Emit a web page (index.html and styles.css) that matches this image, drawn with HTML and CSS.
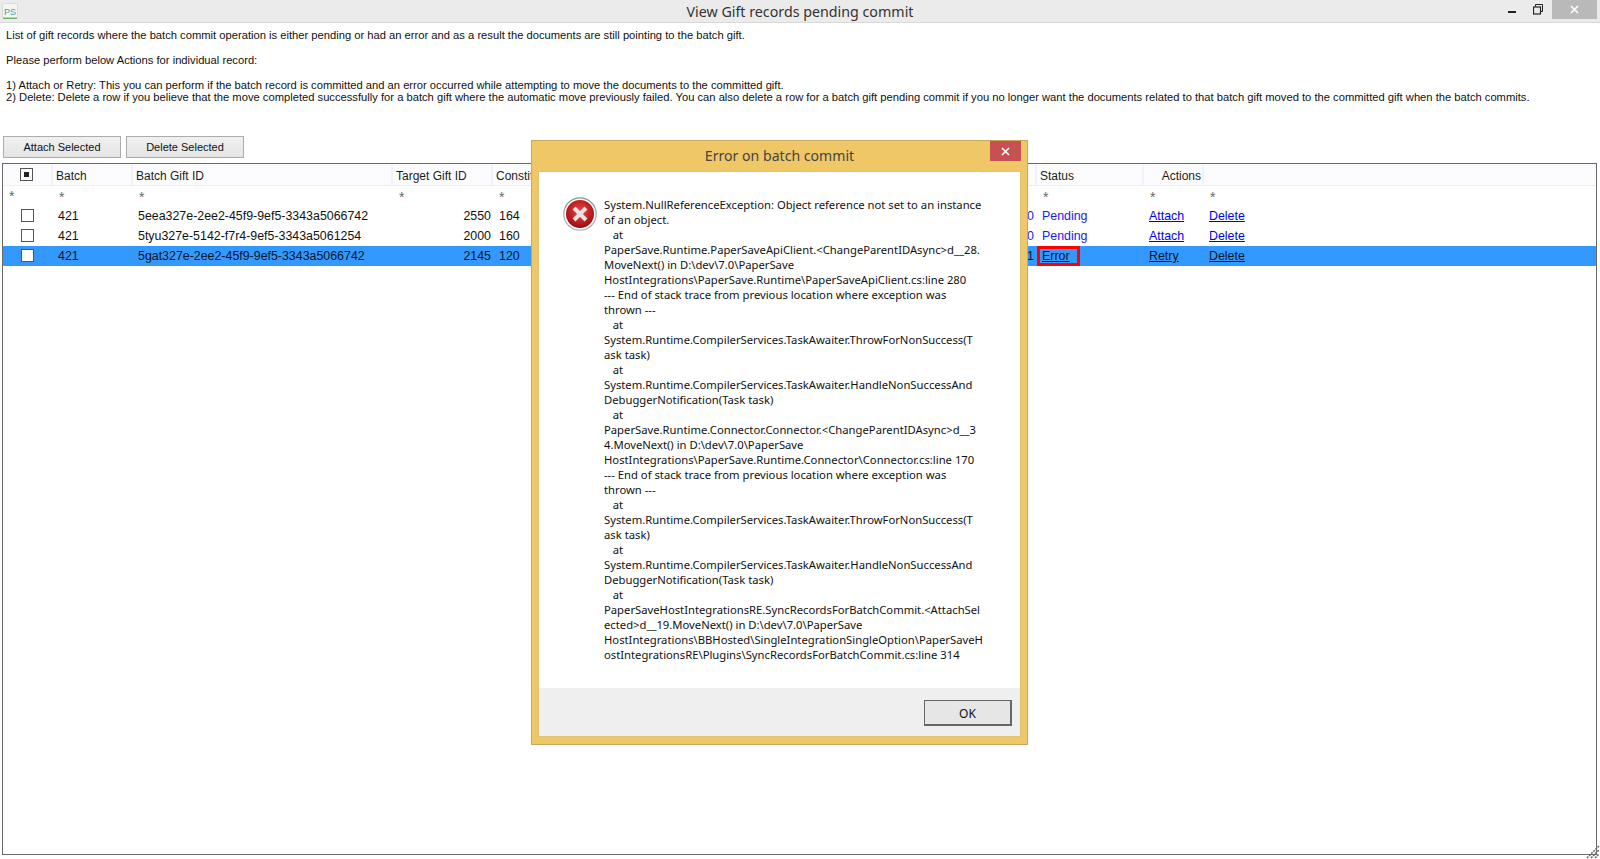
FILE: index.html
```html
<!DOCTYPE html>
<html lang="en">
<head>
<meta charset="utf-8">
<title>View Gift records pending commit</title>
<link rel="stylesheet" href="styles.css">
</head>
<body>
<div class="window">
  <header class="titlebar">
    <svg class="app-icon" width="16" height="16" viewBox="0 0 16 16"><rect x="0.5" y="0.5" width="15" height="15" rx="2" fill="#f4f6f4" stroke="#d5ddd5"/><path d="M1 15.2h14" stroke="#58a84a" stroke-width="1.2"/><text x="2" y="12" class="app-icon-text">PS</text></svg>
    <div class="title">View Gift records pending commit</div>
    <div class="controls">
      <svg class="ctl-min" width="8" height="2" viewBox="0 0 8 2"><rect width="8" height="2" fill="#222"/></svg>
      <svg class="ctl-max" width="10" height="11" viewBox="0 0 10 11"><path d="M2.5 2.5V.5h7v7H7.5" fill="none" stroke="#222"/><rect x=".5" y="3" width="7" height="7" fill="none" stroke="#222" stroke-width="1.2"/></svg>
      <div class="ctl-close"><svg width="9" height="9" viewBox="0 0 9 9"><path d="M1 1l7 7M8 1L1 8" stroke="#fff" stroke-width="1.6"/></svg></div>
    </div>
  </header>

  <section class="notes">
    <p class="gap">List of gift records where the batch commit operation is either pending or had an error and as a result the documents are still pointing to the batch gift.</p>
    <p class="gap">Please perform below Actions for individual record:</p>
    <p>1) Attach or Retry: This you can perform if the batch record is committed and an error occurred while attempting to move the documents to the committed gift.</p>
    <p>2) Delete: Delete a row if you believe that the move completed successfully for a batch gift where the automatic move previously failed. You can also delete a row for a batch gift pending commit if you no longer want the documents related to that batch gift moved to the committed gift when the batch commits.</p>
  </section>

  <div class="toolbar">
    <button class="btn">Attach Selected</button>
    <button class="btn">Delete Selected</button>
  </div>

  <main class="grid">
    <div class="row head">
      <div class="c c-check"><span class="check mixed"></span></div>
      <div class="c c-batch">Batch</div>
      <div class="c c-gift">Batch Gift ID</div>
      <div class="c c-target">Target Gift ID</div>
      <div class="c c-cons">Constituent ID</div>
      <div class="c c-hidden"></div>
      <div class="c c-status">Status</div>
      <div class="c c-act actions-h">Actions</div>
      <div class="c c-del"></div>
    </div>
    <div class="row filter">
      <div class="c c-check star-first">*</div>
      <div class="c c-batch">*</div>
      <div class="c c-gift">*</div>
      <div class="c c-target">*</div>
      <div class="c c-cons">*</div>
      <div class="c c-hidden"></div>
      <div class="c c-status">*</div>
      <div class="c c-act">*</div>
      <div class="c c-del">*</div>
    </div>
    <div class="row">
      <div class="c c-check"><span class="check"></span></div>
      <div class="c c-batch">421</div>
      <div class="c c-gift">5eea327e-2ee2-45f9-9ef5-3343a5066742</div>
      <div class="c c-target num">2550</div>
      <div class="c c-cons">164</div>
      <div class="c c-hidden num link-plain">0</div>
      <div class="c c-status link-plain">Pending</div>
      <div class="c c-act"><a href="#">Attach</a></div>
      <div class="c c-del"><a href="#">Delete</a></div>
    </div>
    <div class="row">
      <div class="c c-check"><span class="check"></span></div>
      <div class="c c-batch">421</div>
      <div class="c c-gift">5tyu327e-5142-f7r4-9ef5-3343a5061254</div>
      <div class="c c-target num">2000</div>
      <div class="c c-cons">160</div>
      <div class="c c-hidden num link-plain">0</div>
      <div class="c c-status link-plain">Pending</div>
      <div class="c c-act"><a href="#">Attach</a></div>
      <div class="c c-del"><a href="#">Delete</a></div>
    </div>
    <div class="row selected">
      <div class="c c-check"><span class="check"></span></div>
      <div class="c c-batch">421</div>
      <div class="c c-gift">5gat327e-2ee2-45f9-9ef5-3343a5066742</div>
      <div class="c c-target num">2145</div>
      <div class="c c-cons">120</div>
      <div class="c c-hidden num">1</div>
      <div class="c c-status"><a class="error-box" href="#">Error</a></div>
      <div class="c c-act"><a href="#">Retry</a></div>
      <div class="c c-del"><a href="#">Delete</a></div>
    </div>
  </main>
  <svg class="grip" width="14" height="14" viewBox="0 0 14 14"><path d="M1 13L13 1M5 13L13 5M9 13l4-4" stroke="#666" stroke-width="1.5" stroke-dasharray="2 1"/></svg>
</div>

<div class="dialog" role="dialog">
  <div class="dialog-title">
    <span>Error on batch commit</span>
    <div class="dialog-close"><svg width="9" height="9" viewBox="0 0 9 9"><path d="M1 1l7 7M8 1L1 8" stroke="#fff" stroke-width="1.6"/></svg></div>
  </div>
  <div class="dialog-inner">
    <div class="dialog-body">
      <svg class="err-icon" width="34" height="34" viewBox="0 0 34 34">
        <defs>
          <radialGradient id="red" cx="50%" cy="40%" r="60%"><stop offset="0" stop-color="#e4474a"/><stop offset="0.7" stop-color="#bb1c20"/><stop offset="1" stop-color="#8e0f12"/></radialGradient>
          <linearGradient id="ring" x1="0" y1="0" x2="0" y2="1"><stop offset="0" stop-color="#8f8f8f"/><stop offset="1" stop-color="#b8b8b8"/></linearGradient>
        </defs>
        <circle cx="17" cy="17" r="16.2" fill="#fff" stroke="url(#ring)" stroke-width="1.2"/>
        <circle cx="17" cy="17" r="14" fill="url(#red)"/>
        <path d="M11 11l12 12M23 11L11 23" stroke="#e8e4e4" stroke-width="4"/>
      </svg>
      <div class="message">System.NullReferenceException: Object reference not set to an instance
of an object.
   at
PaperSave.Runtime.PaperSaveApiClient.&lt;ChangeParentIDAsync&gt;d__28.
MoveNext() in D:\dev\7.0\PaperSave
HostIntegrations\PaperSave.Runtime\PaperSaveApiClient.cs:line 280
--- End of stack trace from previous location where exception was
thrown ---
   at
System.Runtime.CompilerServices.TaskAwaiter.ThrowForNonSuccess(T
ask task)
   at
System.Runtime.CompilerServices.TaskAwaiter.HandleNonSuccessAnd
DebuggerNotification(Task task)
   at
PaperSave.Runtime.Connector.Connector.&lt;ChangeParentIDAsync&gt;d__3
4.MoveNext() in D:\dev\7.0\PaperSave
HostIntegrations\PaperSave.Runtime.Connector\Connector.cs:line 170
--- End of stack trace from previous location where exception was
thrown ---
   at
System.Runtime.CompilerServices.TaskAwaiter.ThrowForNonSuccess(T
ask task)
   at
System.Runtime.CompilerServices.TaskAwaiter.HandleNonSuccessAnd
DebuggerNotification(Task task)
   at
PaperSaveHostIntegrationsRE.SyncRecordsForBatchCommit.&lt;AttachSel
ected&gt;d__19.MoveNext() in D:\dev\7.0\PaperSave
HostIntegrations\BBHosted\SingleIntegrationSingleOption\PaperSaveH
ostIntegrationsRE\Plugins\SyncRecordsForBatchCommit.cs:line 314</div>
    </div>
    <div class="dialog-foot"><button class="ok">OK</button></div>
  </div>
</div>
</body>
</html>
```
FILE: styles.css
```css
* { box-sizing: border-box; }
html, body { margin: 0; height: 859px; overflow: hidden; background: #fff; }
body { font-family: "Liberation Sans", Arial, sans-serif; font-size: 12.4px; color: #111; position: relative; }
.window { height: 859px; display: flex; flex-direction: column; }

.titlebar { height: 23px; flex: none; background: #ebebeb; border-bottom: 1px solid #d8d8d8; display: flex; align-items: flex-start; position: relative; }
.app-icon { margin: 3px 0 0 2px; }
.app-icon-text { font: 9px "Liberation Sans", sans-serif; fill: #3aa0a8; }
.title { position: absolute; left: 0; right: 0; top: 3px; text-align: center; font: 14.25px/17px "Noto Sans", sans-serif; color: #333; }
.controls { margin-left: auto; display: flex; align-items: flex-start; position: relative; }
.ctl-min { margin: 11px 17px 0 0; }
.ctl-max { margin: 4px 9px 0 0; }
.ctl-close { width: 45px; height: 19px; margin-right: 3px; background: #b9b9b9; display: flex; align-items: center; justify-content: center; }

.notes { padding: 6px 0 0 6px; height: 113px; flex: none; font-size: 11.2px; line-height: 12px; color: #111; }
.notes p { margin: 0; white-space: nowrap; }
.notes .gap { margin-bottom: 13px; }

.toolbar { display: flex; gap: 5px; padding-left: 3px; height: 27px; flex: none; }
.btn { width: 118px; height: 22px; padding: 0; font: 11px "Liberation Sans", sans-serif; color: #111; border: 1px solid #acacac; background: linear-gradient(#f0f0f0, #e5e5e5); }

.grid { flex: none; height: 692px; margin: 0 3px 0 2px; border: 1px solid #696969; background: #fff; overflow: hidden; }
.row { display: flex; height: 20px; align-items: center; }
.row.head { height: 22px; border-bottom: 1px solid #e8f0f8; background: #fcfcfe; font-size: 12px; color: #1c1c1c; }
.row.filter { color: #666; height: 20px; }
.c { flex: none; white-space: nowrap; overflow: hidden; padding-left: 5px; height: 100%; line-height: 20px; }
.head .c { border-right: 2px solid #f0f4fa; padding-left: 3px; line-height: 24px; }
.head .c-del { border-right: 0; }
.c-check { width: 50px; padding: 0 1px 0 0; display: flex; justify-content: center; align-items: center; }
.c-check .check { margin-top: -1px; }
.head .c-check .check { margin-top: 0; }
.c-batch { width: 80px; padding-left: 5px; }
.c-gift { width: 260px; }
.c-target { width: 100px; }
.c-cons { width: 400px; }
.c-hidden { width: 144px; }
.c-status { width: 107px; }
.c-act { width: 60px; }
.c-del { width: 100px; }
.head .c-check { padding-left: 0; }
.filter .c { padding-left: 6px; font-size: 14px; line-height: 22px; }
.filter .c.star-first { justify-content: flex-start; padding-left: 6px; }
.num { text-align: right; padding-right: 2px; }
.c-hidden.num { padding-right: 3px; }
.c-cons { padding-left: 6px; }
.head .actions-h { text-align: right; padding-right: 1px; }
.check { display: block; width: 13px; height: 13px; border: 1px solid #555; background: #fff; position: relative; }
.check.mixed::after { content: ""; position: absolute; left: 3px; top: 3px; width: 5px; height: 5px; background: #222; }
.link-plain { color: #1a1aee; }
a { color: #0000ee; }
.selected { background: #3399ff; }
.selected a, .selected .c { color: #061428; }
.error-box { display: block; width: 43px; height: 20px; margin-left: -5px; padding-left: 2px; line-height: 14px; border: 3px solid #f00; }

.grip { position: absolute; right: 0; bottom: 0; }

.dialog { position: absolute; left: 531px; top: 140px; width: 497px; height: 605px; border: 1px solid #c9a85a; background: #f0c766; padding: 0 6px 7px 6px; display: flex; flex-direction: column; }
.dialog-title { height: 30px; flex: none; position: relative; text-align: center; font: 14.1px/29px "Noto Sans", sans-serif; color: #444; }
.dialog-close { position: absolute; right: 0; top: 0; width: 31px; height: 20px; background: #c75050; display: flex; align-items: center; justify-content: center; }
.dialog-inner { flex: 1; background: #fff; display: flex; flex-direction: column; border: 1px solid #dfc27a; }
.dialog-body { flex: 1; display: flex; padding: 25px 0 0 24px; }
.err-icon { flex: none; margin-right: 7px; margin-top: 0; }
.message { white-space: pre; font: 11.25px/15px "Noto Sans", sans-serif; color: #111; }
.dialog-foot { height: 48px; flex: none; background: #efefef; display: flex; justify-content: flex-end; padding: 12px 8px 0 0; }
.ok { width: 88px; height: 26px; padding: 2px 0 0; font: 12px "Noto Sans", sans-serif; color: #111; background: #e6e6e6; border: 1px solid #666; border-right-width: 2px; border-bottom-width: 2px; }
```
